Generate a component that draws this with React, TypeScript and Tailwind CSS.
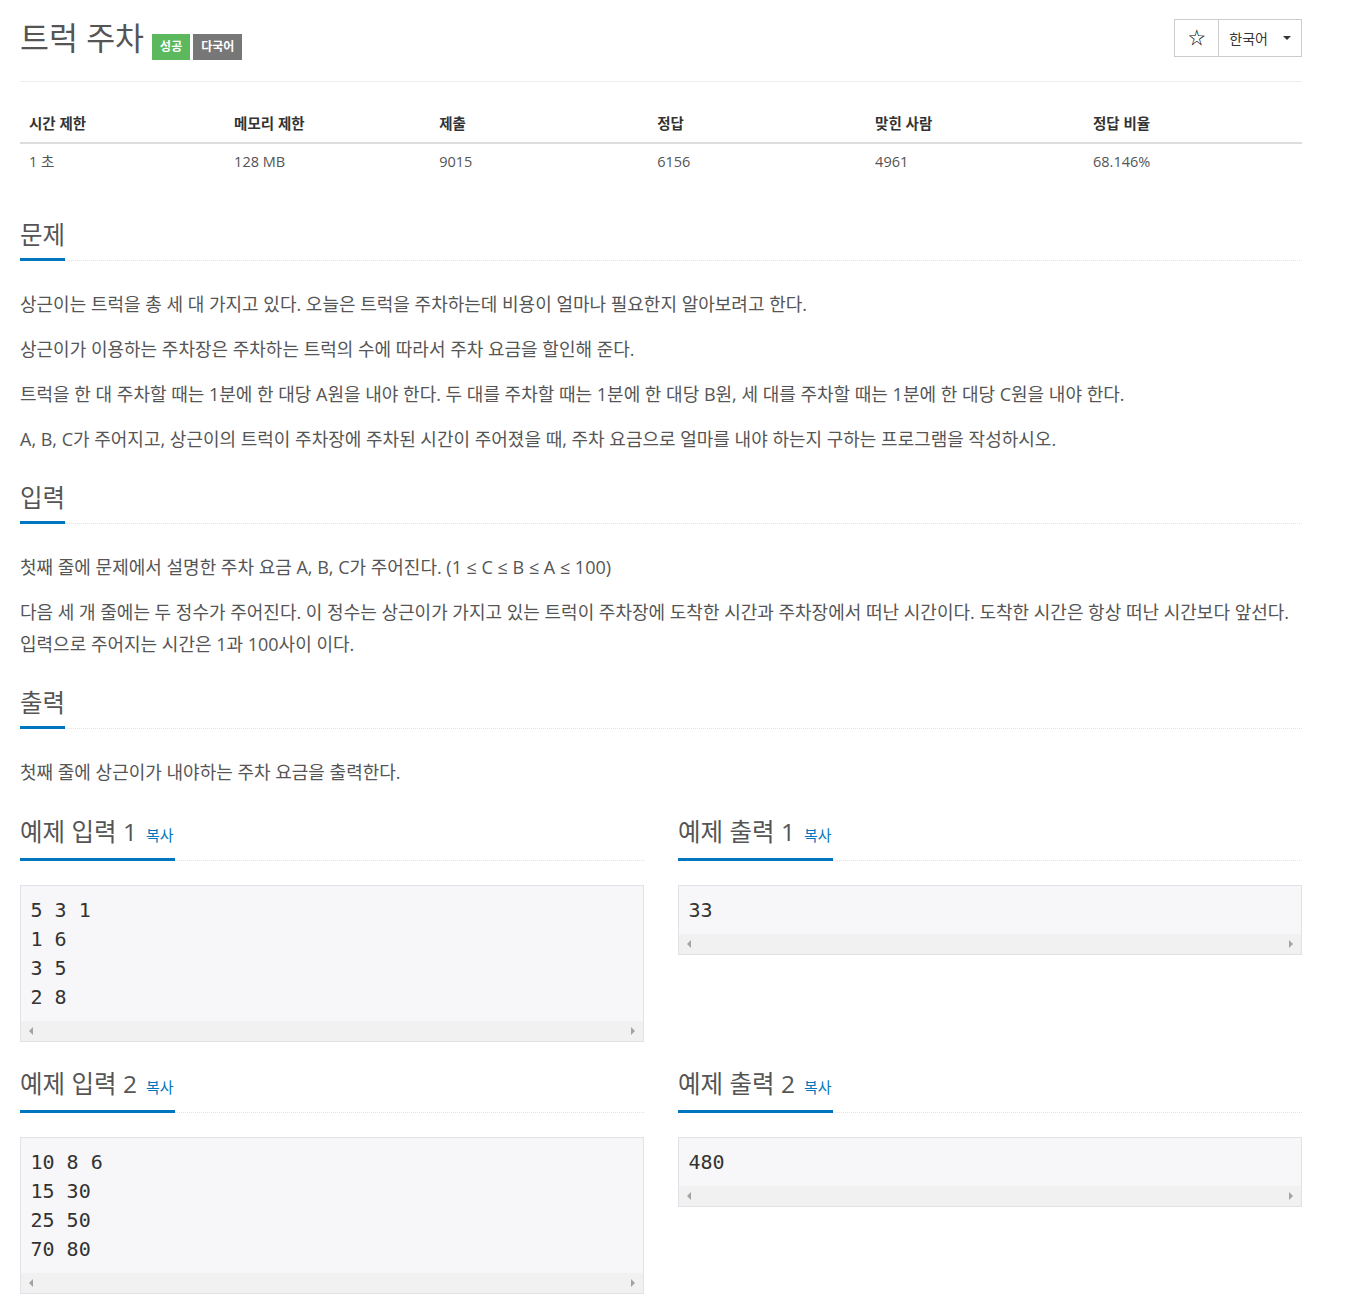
import { ReactNode } from 'react';

const FONT = { fontFamily: '"Open Sans", "Noto Sans CJK KR", sans-serif' };
const MONO = { fontFamily: '"DejaVu Sans Mono", "Liberation Mono", monospace' };

const LIMITS = [
  { label: '시간 제한', value: '1 초', w: 'w-[16%]' },
  { label: '메모리 제한', value: '128 MB', w: 'w-[16%]' },
  { label: '제출', value: '9015', w: 'w-[17%]' },
  { label: '정답', value: '6156', w: 'w-[17%]' },
  { label: '맞힌 사람', value: '4961', w: 'w-[17%]' },
  { label: '정답 비율', value: '68.146%', w: 'w-[17%]' },
];

const SAMPLES = [
  { n: 1, input: '5 3 1\n1 6\n3 5\n2 8', output: '33' },
  { n: 2, input: '10 8 6\n15 30\n25 50\n70 80', output: '480' },
];

function Headline({ children, copy }: { children: ReactNode; copy?: boolean }) {
  return (
    <div className={`${copy ? 'mb-[24px]' : 'mb-[27px]'} border-b border-dotted border-[#dfe3e8]`}>
      <h2 className="-mb-px inline-flex items-baseline gap-[9px] border-b-[3px] border-[#0076c0] pb-[6px] text-[24.5px] leading-[34px] text-[#555]">
        {children}
        {copy && <span className="pr-px text-[15px] text-[#0076c0]">복사</span>}
      </h2>
    </div>
  );
}

function Para({ children }: { children: ReactNode }) {
  return <p className="mb-[13px] text-[18px] leading-[32px] text-[#555]">{children}</p>;
}

function ScrollBar() {
  return (
    <div className="flex h-[20px] items-center justify-between bg-[#f1f1f1] px-[8px]">
      <span className="h-0 w-0 border-y-[4px] border-r-[4px] border-y-transparent border-r-[#a3a3a3]" />
      <span className="h-0 w-0 border-y-[4px] border-l-[4px] border-y-transparent border-l-[#a3a3a3]" />
    </div>
  );
}

function Sample({ text }: { text: string }) {
  return (
    <div className="border border-[#e1e1e8] bg-[#f7f7f9]">
      <pre className="px-[9.5px] py-[9.5px] text-[20px] leading-[29px] text-[#333]" style={MONO}>
        {text}
      </pre>
      <ScrollBar />
    </div>
  );
}

export default function App() {
  return (
    <div className="min-h-[1310px] bg-white" style={FONT}>
      <div className="ml-[20px] w-[1282px]">
        {/* page header */}
        <div className="flex items-start justify-between border-b border-[#eee] pb-[21px] pt-[19px]">
          <div className="flex items-start gap-[8px]">
            <h1 className="text-[31.5px] leading-[38px] text-[#555]">트럭 주차</h1>
            <div className="mt-[15px] flex gap-[3px]">
              <span className="flex h-[26px] items-center bg-[#5cb85c] px-[8px] text-[12px] font-semibold text-white">성공</span>
              <span className="flex h-[26px] items-center bg-[#777] px-[8px] text-[12px] font-semibold text-white">다국어</span>
            </div>
          </div>
          <div className="flex h-[38px] border border-[#ccc] text-[14px] text-[#333]">
            <span className="flex w-[44px] items-center justify-center border-r border-[#ccc] text-[17px] text-black">☆</span>
            <span className="flex items-center gap-[15px] pl-[10px] pr-[10px]">
              한국어
              <span className="h-0 w-0 border-x-[4px] border-t-[4px] border-x-transparent border-t-[#333]" />
            </span>
          </div>
        </div>

        {/* limits table */}
        <table className="mb-[38px] mt-[24px] w-full table-fixed text-[14.5px]">
          <thead>
            <tr className="border-b-2 border-[#ddd]">
              {LIMITS.map((l) => (
                <th key={l.label} className={`${l.w} px-[9px] py-[8px] text-left font-bold leading-[20px] text-[#333]`}>
                  {l.label}
                </th>
              ))}
            </tr>
          </thead>
          <tbody>
            <tr>
              {LIMITS.map((l) => (
                <td key={l.label} className="px-[9px] py-[8px] leading-[20px] text-[#555]">
                  {l.value}
                </td>
              ))}
            </tr>
          </tbody>
        </table>

        <section className="mb-[26px]">
          <Headline>문제</Headline>
          <Para>상근이는 트럭을 총 세 대 가지고 있다. 오늘은 트럭을 주차하는데 비용이 얼마나 필요한지 알아보려고 한다.</Para>
          <Para>상근이가 이용하는 주차장은 주차하는 트럭의 수에 따라서 주차 요금을 할인해 준다.</Para>
          <Para>트럭을 한 대 주차할 때는 1분에 한 대당 A원을 내야 한다. 두 대를 주차할 때는 1분에 한 대당 B원, 세 대를 주차할 때는 1분에 한 대당 C원을 내야 한다.</Para>
          <Para>A, B, C가 주어지고, 상근이의 트럭이 주차장에 주차된 시간이 주어졌을 때, 주차 요금으로 얼마를 내야 하는지 구하는 프로그램을 작성하시오.</Para>
        </section>

        <section className="mb-[26px]">
          <Headline>입력</Headline>
          <Para>첫째 줄에 문제에서 설명한 주차 요금 A, B, C가 주어진다. (1 ≤ C ≤ B ≤ A ≤ 100)</Para>
          <Para>
            다음 세 개 줄에는 두 정수가 주어진다. 이 정수는 상근이가 가지고 있는 트럭이 주차장에 도착한 시간과 주차장에서 떠난 시간이다. 도착한 시간은 항상 떠난 시간보다 앞선다. 입력으로 주어지는 시간은 1과 100사이 이다.
          </Para>
        </section>

        <section className="mb-[27px]">
          <Headline>출력</Headline>
          <Para>첫째 줄에 상근이가 내야하는 주차 요금을 출력한다.</Para>
        </section>

        {SAMPLES.map((s) => (
          <div key={s.n} className="mb-[25px] grid grid-cols-2 items-start gap-x-[34px]">
            <div>
              <Headline copy>예제 입력 {s.n}</Headline>
              <Sample text={s.input} />
            </div>
            <div>
              <Headline copy>예제 출력 {s.n}</Headline>
              <Sample text={s.output} />
            </div>
          </div>
        ))}
      </div>
    </div>
  );
}
